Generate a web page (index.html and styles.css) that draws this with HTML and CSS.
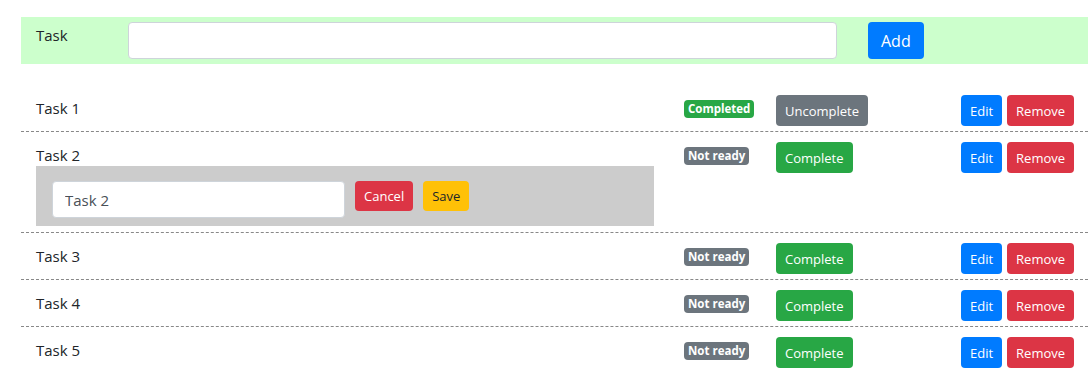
FILE: index.html
```html
<!DOCTYPE html>
<html lang="en">
<head>
    <meta charset="UTF-8">
    <meta name="viewport" content="width=device-width, initial-scale=1.0">
    <title>Todo list</title>
    <link rel="stylesheet" href="styles.css">
</head>
<body>
    <div class="container">
        <form class="add-form">
            <label class="add-label" for="newTask">Task</label>
            <input class="form-control add-input" id="newTask" type="text">
            <button type="button" class="btn btn-primary add-btn">Add</button>
        </form>

        <ul class="task-list">
            <li class="task-row">
                <div class="task-name">Task 1</div>
                <div class="task-status"><span class="badge badge-success">Completed</span></div>
                <div class="task-toggle"><button class="btn btn-sm btn-secondary">Uncomplete</button></div>
                <div class="task-actions">
                    <button class="btn btn-sm btn-primary">Edit</button>
                    <button class="btn btn-sm btn-danger">Remove</button>
                </div>
            </li>
            <li class="task-row">
                <div class="task-name">
                    Task 2
                    <div class="edit-panel">
                        <input class="form-control edit-input" type="text" value="Task 2">
                        <button class="btn btn-sm btn-danger">Cancel</button>
                        <button class="btn btn-sm btn-warning">Save</button>
                    </div>
                </div>
                <div class="task-status"><span class="badge badge-secondary">Not ready</span></div>
                <div class="task-toggle"><button class="btn btn-sm btn-success">Complete</button></div>
                <div class="task-actions">
                    <button class="btn btn-sm btn-primary">Edit</button>
                    <button class="btn btn-sm btn-danger">Remove</button>
                </div>
            </li>
            <li class="task-row">
                <div class="task-name">Task 3</div>
                <div class="task-status"><span class="badge badge-secondary">Not ready</span></div>
                <div class="task-toggle"><button class="btn btn-sm btn-success">Complete</button></div>
                <div class="task-actions">
                    <button class="btn btn-sm btn-primary">Edit</button>
                    <button class="btn btn-sm btn-danger">Remove</button>
                </div>
            </li>
            <li class="task-row">
                <div class="task-name">Task 4</div>
                <div class="task-status"><span class="badge badge-secondary">Not ready</span></div>
                <div class="task-toggle"><button class="btn btn-sm btn-success">Complete</button></div>
                <div class="task-actions">
                    <button class="btn btn-sm btn-primary">Edit</button>
                    <button class="btn btn-sm btn-danger">Remove</button>
                </div>
            </li>
            <li class="task-row">
                <div class="task-name">Task 5</div>
                <div class="task-status"><span class="badge badge-secondary">Not ready</span></div>
                <div class="task-toggle"><button class="btn btn-sm btn-success">Complete</button></div>
                <div class="task-actions">
                    <button class="btn btn-sm btn-primary">Edit</button>
                    <button class="btn btn-sm btn-danger">Remove</button>
                </div>
            </li>
        </ul>
    </div>
</body>
</html>
```

FILE: styles.css
```css
body {
    margin: 0;
    font-family: "Open Sans", "Noto Sans", sans-serif;
    font-size: 15px;
    line-height: 24px;
    color: #212529;
    background: #fff;
    overflow: hidden;
}

.container {
    padding: 17px 0 0 21px;
}

/* form for new tasks */
.add-form {
    display: flex;
    align-items: flex-start;
    background: #ccffcc;
    padding: 5px 0 5px 15px;
    height: 37px;
}

.add-label {
    width: 92px;
    padding-top: 1px;
}

.form-control {
    box-sizing: border-box;
    height: 37px;
    border: 1px solid #ced4da;
    border-radius: 4px;
    background: #fff;
    font-family: inherit;
    font-size: 15px;
    color: #495057;
    padding: 6px 12px;
}

.add-input {
    width: 709px;
}

.add-btn {
    margin-left: 31px;
    height: 37px;
    padding: 0 12px;
    font-size: 16px;
}

/* buttons and badges */
.btn {
    font-family: inherit;
    border: 1px solid transparent;
    border-radius: 4px;
    color: #fff;
    cursor: pointer;
}

.btn-sm {
    height: 31px;
    padding: 0 8px;
    font-size: 13px;
}

.btn-primary { background: #007bff; }
.btn-secondary { background: #6c757d; }
.btn-success { background: #28a745; }
.btn-danger { background: #dc3545; }
.btn-warning { background: #ffc107; color: #212529; }

.badge {
    display: block;
    font-size: 11.5px;
    font-weight: 700;
    line-height: 18px;
    padding: 0 4px;
    border-radius: 4px;
    color: #fff;
}

.badge-success { background: #28a745; }
.badge-secondary { background: #6c757d; }

/* task list */
.task-list {
    list-style: none;
    margin: 21px 0 0;
    padding: 0;
}

.task-row {
    display: flex;
    align-items: flex-start;
    padding: 10px 0 5px 15px;
    border-bottom: 1px dashed #888;
}

.task-row:last-child {
    border-bottom: none;
}

.task-name {
    width: 648px;
    padding-top: 1px;
}

.task-status {
    width: 92px;
    padding-top: 5px;
    display: flex;
}

.task-toggle {
    width: 185px;
}

.task-actions {
    display: flex;
    gap: 5px;
}

/* inline edit panel */
.edit-panel {
    display: flex;
    align-items: flex-start;
    gap: 10px;
    width: 618px;
    box-sizing: border-box;
    background: #ccc;
    padding: 15px 16px 8px;
    margin: -1px 0 1px;
}

.edit-input {
    width: 293px;
}

.edit-panel .btn {
    height: 30px;
    padding: 0 8px;
    font-size: 13px;
}
```
